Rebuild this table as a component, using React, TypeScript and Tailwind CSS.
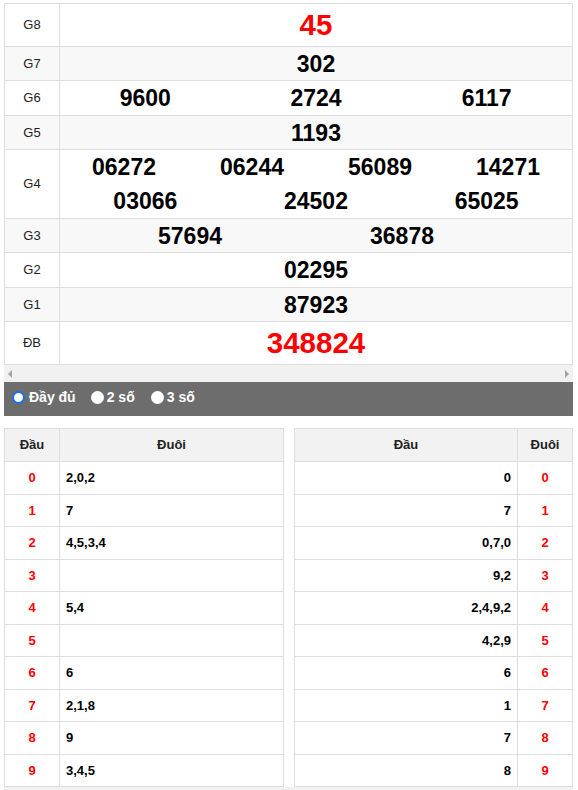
import React from "react";

const F = { fontFamily: "'Liberation Sans', Arial, Helvetica, sans-serif" };

function Row({
  label,
  h,
  alt,
  children,
}: {
  label: string;
  h: string;
  alt?: boolean;
  children: React.ReactNode;
}) {
  return (
    <div className={`flex border-b border-[#dddddd] ${h} ${alt ? "bg-[#f8f8f8]" : "bg-white"}`}>
      <div className="w-[55px] shrink-0 border-r border-[#dddddd] flex items-center justify-center text-[13px] text-[#222]">
        {label}
      </div>
      <div className="flex-1 flex flex-col justify-center">{children}</div>
    </div>
  );
}

const Num = ({ v, cls = "" }: { v: string; cls?: string }) => (
  <div className={`text-center font-bold text-[23px] leading-[26px] text-black ${cls}`}>{v}</div>
);

const loto: [string, string][] = [
  ["0", "2,0,2"],
  ["1", "7"],
  ["2", "4,5,3,4"],
  ["3", ""],
  ["4", "5,4"],
  ["5", ""],
  ["6", "6"],
  ["7", "2,1,8"],
  ["8", "9"],
  ["9", "3,4,5"],
];

const loto2: [string, string][] = [
  ["0", "0"],
  ["7", "1"],
  ["0,7,0", "2"],
  ["9,2", "3"],
  ["2,4,9,2", "4"],
  ["4,2,9", "5"],
  ["6", "6"],
  ["1", "7"],
  ["7", "8"],
  ["8", "9"],
];

const rowH = ["h-[33px]", "h-[32px]", "h-[33px]", "h-[32px]", "h-[33px]", "h-[32px]", "h-[33px]", "h-[32px]", "h-[33px]", "h-[32px]"];

export default function App() {
  return (
    <div style={F} className="w-[578px] h-[790px] bg-white overflow-hidden">
      <div className="pt-[3px] ml-[4px] w-[569px]">
        <div className="border-l border-r border-t border-[#dddddd]">
          <Row label="G8" h="h-[43px]">
            <div className="text-center font-bold text-[29.5px] leading-[32px] text-[#ff0000]">45</div>
          </Row>
          <Row label="G7" h="h-[34px]" alt>
            <Num v="302" />
          </Row>
          <Row label="G6" h="h-[35px]">
            <div className="grid grid-cols-3">
              <Num v="9600" />
              <Num v="2724" />
              <Num v="6117" />
            </div>
          </Row>
          <Row label="G5" h="h-[34px]" alt>
            <Num v="1193" />
          </Row>
          <Row label="G4" h="h-[69px]">
            <div className="grid grid-cols-4 mb-[8px]">
              <Num v="06272" />
              <Num v="06244" />
              <Num v="56089" />
              <Num v="14271" />
            </div>
            <div className="grid grid-cols-3">
              <Num v="03066" />
              <Num v="24502" />
              <Num v="65025" />
            </div>
          </Row>
          <Row label="G3" h="h-[34px]" alt>
            <div className="flex">
              <Num v="57694" cls="w-[260px]" />
              <Num v="36878" cls="w-[164px]" />
            </div>
          </Row>
          <Row label="G2" h="h-[35px]">
            <Num v="02295" />
          </Row>
          <Row label="G1" h="h-[34px]" alt>
            <Num v="87923" />
          </Row>
          <Row label="ĐB" h="h-[43px]">
            <div className="text-center font-bold text-[29.5px] leading-[32px] text-[#ff0000]">348824</div>
          </Row>
        </div>
        <div className="h-[17px] bg-[#f1f1f1] flex items-center justify-between px-[4px]">
          <div className="w-0 h-0 border-y-[4px] border-y-transparent border-r-[4px] border-r-[#a3a3a3]" />
          <div className="w-0 h-0 border-y-[4px] border-y-transparent border-l-[4px] border-l-[#a3a3a3]" />
        </div>
        <div className="h-[34px] bg-[#6d6d6d] flex items-center pb-[4px] pl-[8px] text-white font-bold text-[14px]">
          <span className="w-[13px] h-[13px] rounded-full bg-white border-[2px] border-[#1a73e8] mr-[4px]" />
          <span className="mr-[15px]">Đầy đủ</span>
          <span className="w-[13px] h-[13px] rounded-full bg-white mr-[3px]" />
          <span className="mr-[16px]">2 số</span>
          <span className="w-[13px] h-[13px] rounded-full bg-white mr-[3px]" />
          <span>3 số</span>
        </div>
        <div className="mt-[12px] flex gap-[10px]">
          <div className="w-[280px] border-l border-r border-t border-[#dddddd]">
            <div className="flex h-[33px] bg-[#f2f2f2] border-b border-[#dddddd] font-bold text-[13px] text-[#222]">
              <div className="w-[55px] border-r border-[#dddddd] flex items-center justify-center">Đầu</div>
              <div className="flex-1 flex items-center justify-center">Đuôi</div>
            </div>
            {loto.map(([d, t], i) => (
              <div key={i} className={`flex ${rowH[i]} border-b border-[#dddddd] font-bold text-[13px]`}>
                <div className="w-[55px] border-r border-[#dddddd] flex items-center justify-center text-[#ff0000]">{d}</div>
                <div className="flex-1 flex items-center pl-[6px] text-black">{t}</div>
              </div>
            ))}
          </div>
          <div className="w-[279px] border-l border-r border-t border-[#dddddd]">
            <div className="flex h-[33px] bg-[#f2f2f2] border-b border-[#dddddd] font-bold text-[13px] text-[#222]">
              <div className="flex-1 border-r border-[#dddddd] flex items-center justify-center">Đầu</div>
              <div className="w-[54px] flex items-center justify-center">Đuôi</div>
            </div>
            {loto2.map(([t, d], i) => (
              <div key={i} className={`flex ${rowH[i]} border-b border-[#dddddd] font-bold text-[13px]`}>
                <div className="flex-1 border-r border-[#dddddd] flex items-center justify-end pr-[6px] text-black">{t}</div>
                <div className="w-[54px] flex items-center justify-center text-[#ff0000]">{d}</div>
              </div>
            ))}
          </div>
        </div>
        <div className="h-[6px] bg-[#f1f1f1]" />
      </div>
    </div>
  );
}
